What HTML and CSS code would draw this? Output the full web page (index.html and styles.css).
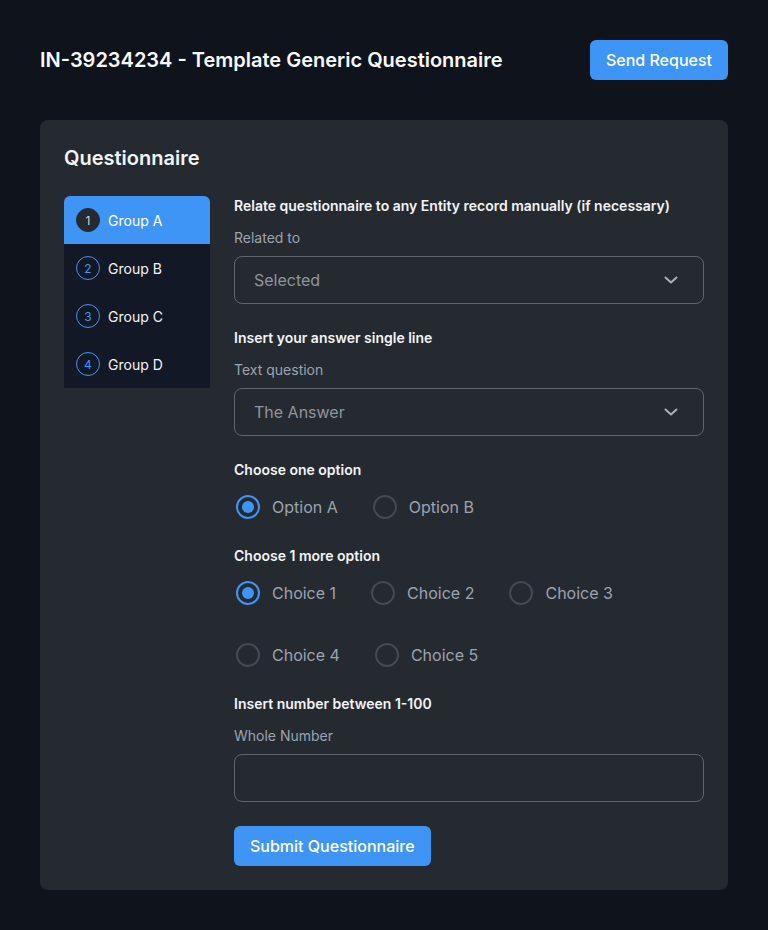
FILE: index.html
```html
<!DOCTYPE html>
<html lang="en">
<head>
<meta charset="utf-8">
<title>Questionnaire</title>
<link rel="stylesheet" href="styles.css">
</head>
<body>
<div class="page">
  <header class="header">
    <h1 class="title">IN-39234234 - Template Generic Questionnaire</h1>
    <button class="btn">Send Request</button>
  </header>
  <section class="card">
    <h2 class="card-title">Questionnaire</h2>
    <div class="layout">
      <nav class="sidebar">
        <div class="group active"><span class="num">1</span><span>Group A</span></div>
        <div class="group"><span class="num">2</span><span>Group B</span></div>
        <div class="group"><span class="num">3</span><span>Group C</span></div>
        <div class="group"><span class="num">4</span><span>Group D</span></div>
      </nav>
      <div class="form">
        <div class="field">
          <div class="q">Relate questionnaire to any Entity record manually (if necessary)</div>
          <div class="label">Related to</div>
          <div class="box select"><span>Selected</span>
            <svg class="chev" width="14" height="8" viewBox="0 0 14 8"><path d="M1.5 1.5 L7 6.5 L12.5 1.5" fill="none" stroke="#aab0b8" stroke-width="2" stroke-linecap="round" stroke-linejoin="round"/></svg>
          </div>
        </div>
        <div class="field">
          <div class="q">Insert your answer single line</div>
          <div class="label">Text question</div>
          <div class="box select"><span>The Answer</span>
            <svg class="chev" width="14" height="8" viewBox="0 0 14 8"><path d="M1.5 1.5 L7 6.5 L12.5 1.5" fill="none" stroke="#aab0b8" stroke-width="2" stroke-linecap="round" stroke-linejoin="round"/></svg>
          </div>
        </div>
        <div class="field">
          <div class="q">Choose one option</div>
          <div class="radios">
            <label class="radio"><span class="dot on"></span>Option A</label>
            <label class="radio"><span class="dot"></span>Option B</label>
          </div>
        </div>
        <div class="field">
          <div class="q">Choose 1 more option</div>
          <div class="radios wrap">
            <label class="radio"><span class="dot on"></span>Choice 1</label>
            <label class="radio"><span class="dot"></span>Choice 2</label>
            <label class="radio"><span class="dot"></span>Choice 3</label>
            <label class="radio"><span class="dot"></span>Choice 4</label>
            <label class="radio"><span class="dot"></span>Choice 5</label>
          </div>
        </div>
        <div class="field">
          <div class="q">Insert number between 1-100</div>
          <div class="label">Whole Number</div>
          <div class="box"></div>
        </div>
        <div><button class="btn">Submit Questionnaire</button></div>
      </div>
    </div>
  </section>
</div>
</body>
</html>
```
FILE: styles.css
```css
* { box-sizing: border-box; }
html, body { margin: 0; padding: 0; }
body {
  background: #0e131c;
  color: #f3f4f6;
  font-family: Inter, "Noto Sans", "Liberation Sans", sans-serif;
}
.page { padding: 40px 40px; }
.header {
  display: flex;
  align-items: center;
  justify-content: space-between;
  height: 40px;
}
.title {
  margin: 0;
  font-size: 20px;
  line-height: 28px;
  font-weight: 600;
  color: #f9fafb;
}
.btn {
  background: #3f95f6;
  color: #fff;
  border: none;
  border-radius: 6px;
  height: 40px;
  padding: 0 16px;
  font-family: inherit;
  font-size: 16px;
  font-weight: 500;
}
.card {
  margin-top: 40px;
  background: #252a31;
  border-radius: 8px;
  padding: 24px;
}
.card-title {
  margin: 0 0 24px;
  font-size: 20px;
  line-height: 28px;
  font-weight: 600;
}
.layout { display: flex; gap: 24px; align-items: flex-start; }
.sidebar {
  width: 146px;
  flex: none;
  background: #121826;
  border-radius: 6px 6px 0 0;
  overflow: hidden;
}
.group {
  height: 48px;
  display: flex;
  align-items: center;
  gap: 8px;
  padding-left: 12px;
  font-size: 14px;
  color: #f3f4f6;
}
.num {
  width: 24px;
  height: 24px;
  border-radius: 50%;
  border: 1px solid #3f95f6;
  color: #3f95f6;
  display: flex;
  align-items: center;
  justify-content: center;
  font-size: 12px;
}
.group.active { background: #3f95f6; color: #fff; }
.group.active .num { background: #252a31; border-color: #252a31; color: #d1d5db; }
.form { flex: 1; display: flex; flex-direction: column; gap: 24px; }
.q { font-size: 14px; line-height: 20px; font-weight: 600; color: #f3f4f6; }
.label { margin-top: 12px; font-size: 14px; line-height: 20px; color: #9ca3af; }
.box {
  margin-top: 8px;
  height: 48px;
  border: 1px solid #5f656d;
  border-radius: 8px;
}
.select {
  display: flex;
  align-items: center;
  justify-content: space-between;
  padding: 0 25px 0 19px;
  font-size: 16px;
  color: #8f959d;
}
.radios { display: flex; gap: 33px; margin-top: 12px; }
.radios.wrap { flex-wrap: wrap; row-gap: 32px; width: 420px; }
.radio {
  display: flex;
  align-items: center;
  gap: 12px;
  height: 30px;
  padding-left: 2px;
  font-size: 16px;
  color: #9ca3af;
}
.dot {
  width: 24px;
  height: 24px;
  border-radius: 50%;
  border: 2px solid #434a53;
  position: relative;
}
.dot.on { border-color: #3f95f6; }
.dot.on::after {
  content: "";
  position: absolute;
  left: 4px;
  top: 4px;
  width: 12px;
  height: 12px;
  border-radius: 50%;
  background: #3f95f6;
}
```
